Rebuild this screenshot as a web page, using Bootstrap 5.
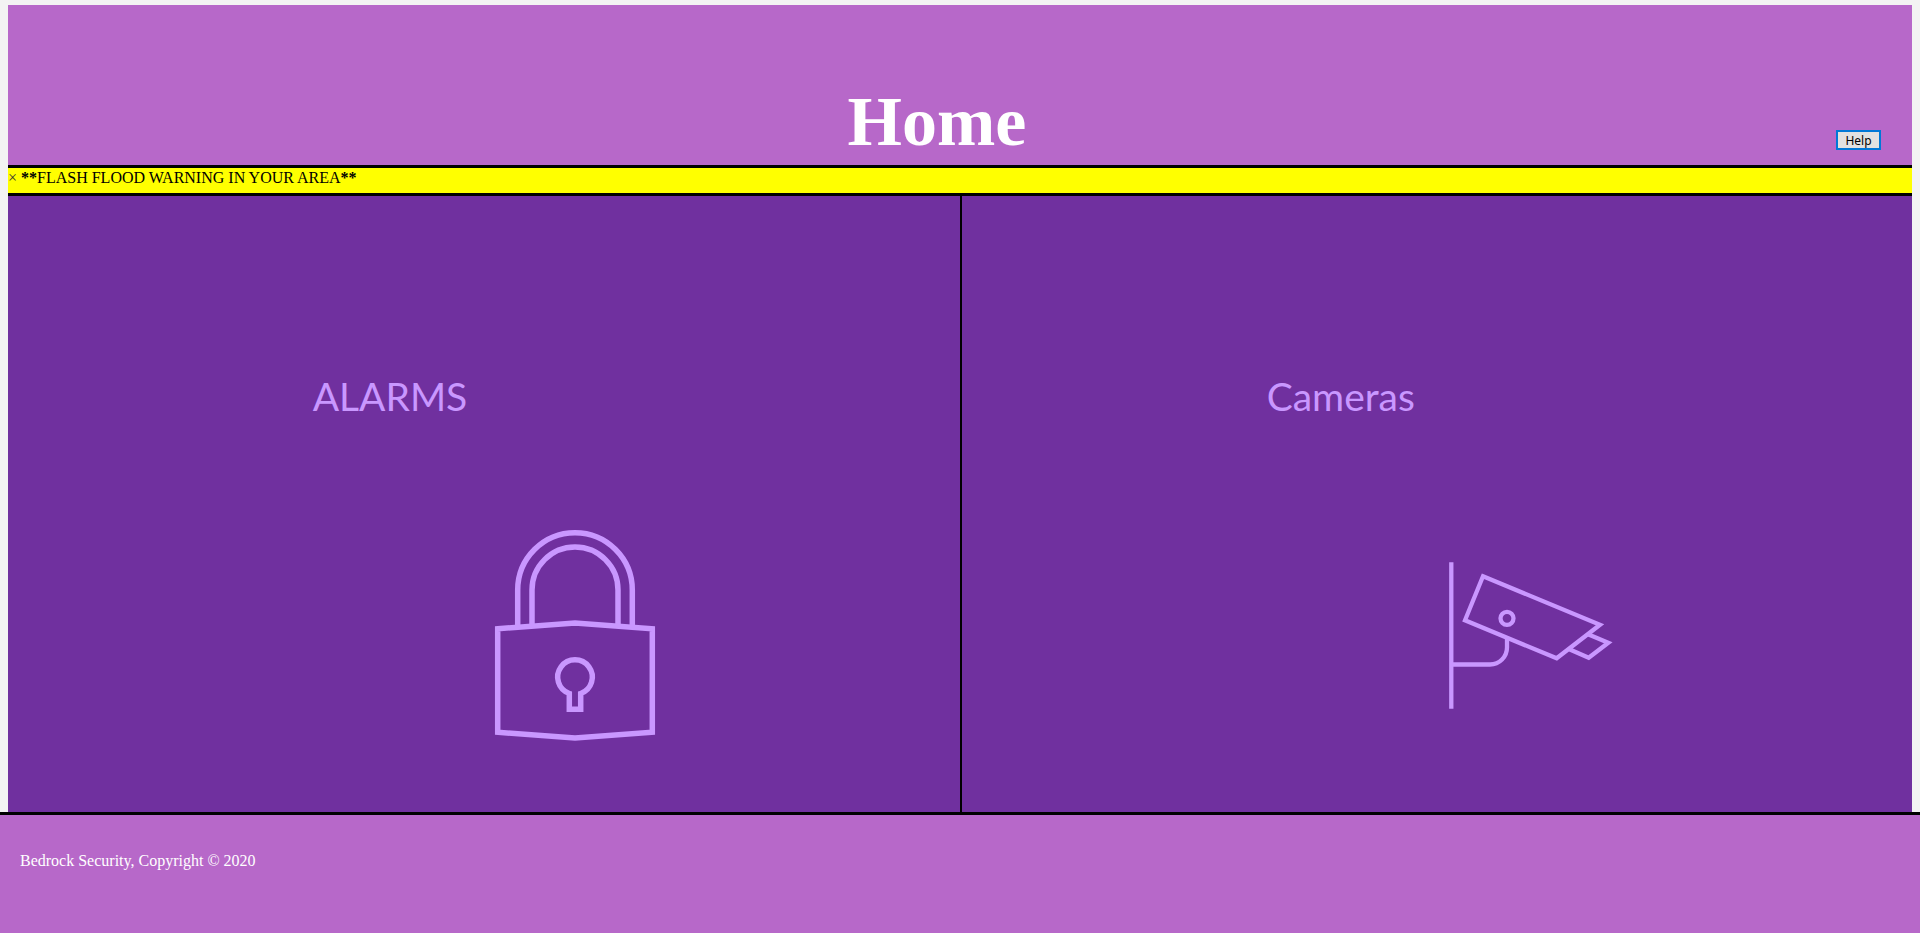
<!DOCTYPE html>
<html lang="en">
<head>
<meta charset="utf-8">
<meta name="viewport" content="width=device-width, initial-scale=1">
<title>Home</title>
<link rel="stylesheet" href="https://cdn.jsdelivr.net/npm/bootstrap@5.3.0/dist/css/bootstrap.min.css">
<style>
  body { background: #f3f3f3; font-family: "Liberation Serif", "Times New Roman", serif; font-size: 16px; line-height: 18px; color: #000; padding-top: 5px; }
  .page-frame { margin: 0 8px; }
  .page-head { background: #b768c9; height: 160px; padding: 0 31px 15px 30px; }
  .page-head h1 { color: #fff; font-size: 70px; line-height: 80px; font-weight: 700; margin-bottom: -12px; }
  .help-btn { width: 45px; height: 20px; padding: 1px 0 0; border: 2px solid #0078d7; background: #e1e1e1; color: #000; font: 12px/15px "Noto Sans", sans-serif; }
  .alert-bar { background: #ff0; border-top: 3px solid #000; border-bottom: 3px solid #000; height: 31px; padding-top: 1px; }
  .close-x { font: inherit; color: #333; }
  .panel-link { background: #70309f; color: #c997ff; padding: 176px 0 40px 16%; }
  .panel-link:hover { color: #fff; }
  .panel-link + .panel-link { border-left: 2px solid #000; }
  .panel-title { font: 39px/48px Lato, sans-serif; }
  .panel-icon { width: 180px; height: 230px; margin: 100px 0 0 172px; fill: none; stroke: currentColor; }
  .page-foot { background: #b768c9; color: #fff; border-top: 3px solid #000; min-height: 121px; padding: 37px 20px; }
</style>
</head>
<body class="d-flex flex-column min-vh-100">
<div class="page-frame d-flex flex-column flex-grow-1">
  <header class="page-head d-flex align-items-end">
    <h1 class="flex-grow-1 text-center">Home</h1>
    <button type="button" class="help-btn">Help</button>
  </header>
  <div class="alert-bar" role="alert">
    <button type="button" class="close-x border-0 bg-transparent p-0" aria-label="Dismiss">×</button>
    <span><strong>**</strong>FLASH FLOOD WARNING IN YOUR AREA<strong>**</strong></span>
  </div>
  <main class="row g-0 flex-grow-1">
    <a href="#alarms" class="panel-link col-6 text-decoration-none">
      <span class="panel-title d-block">ALARMS</span>
      <svg class="panel-icon d-block" viewBox="0 0 180 230" stroke-width="5.5" aria-hidden="true">
        <path d="M32.7 106V70a57.3 57.3 0 0 1 114.6 0v36M47 105V70a43 43 0 0 1 86 0v35"/>
        <path d="M12.7 108.7L90 103l77.300 5.700v103.600L90 218l-77.300-5.700z"/>
        <path d="M84.300 173.500a17.300 17.300 0 1 1 11.400 0v15.800H84.300z"/>
      </svg>
    </a>
    <a href="#cameras" class="panel-link col-6 text-decoration-none">
      <span class="panel-title d-block">Cameras</span>
      <svg class="panel-icon d-block" viewBox="0 0 180 230" stroke-width="4.300" aria-hidden="true">
        <path d="M12.300 42.300v146.400M12.300 144.500H51a17 17 0 0 0 17-17V118"/>
        <path d="M44 56.300l117 48.400-43.300 33.600L26 100.300z"/>
        <path d="M149 114.300l20.300 8.400-19.600 15-19.400-8.400"/>
        <circle cx="68" cy="98.300" r="6.500"/>
      </svg>
    </a>
  </main>
</div>
<footer class="page-foot">Bedrock Security, Copyright © 2020</footer>
<script src="https://cdn.jsdelivr.net/npm/bootstrap@5.3.0/dist/js/bootstrap.bundle.min.js"></script>
</body>
</html>
